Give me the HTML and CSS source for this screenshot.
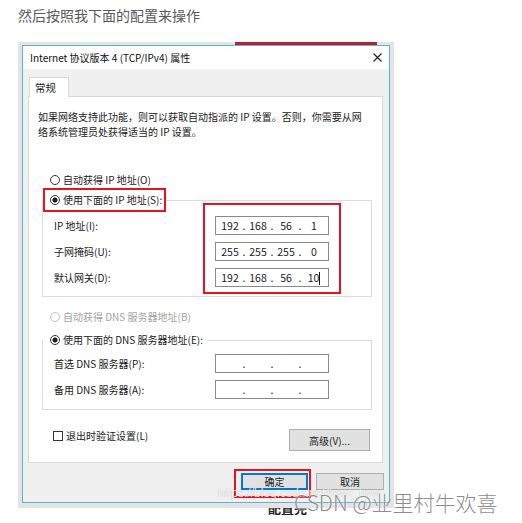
FILE: index.html
```
<!DOCTYPE html>
<html lang="zh-CN">
<head>
    <meta charset="UTF-8">
    <meta name="viewport" content="width=device-width, initial-scale=1.0">
    <link rel="stylesheet" href="styles.css">
</head>
<body>
    <p class="intro">然后按照我下面的配置来操作</p>

    <div class="figure">
        <div class="shot">
            <div class="bg-bar"></div>
            <div class="dialog">
                <div class="titlebar">
                    <span>Internet 协议版本 4 (TCP/IPv4) 属性</span>
                    <svg width="9" height="9" viewBox="0 0 9 9"><path d="M0.5 0.5 L8.5 8.5 M8.5 0.5 L0.5 8.5" stroke="#222" stroke-width="1.1" fill="none"/></svg>
                </div>
                <div class="dlg-body">
                    <div class="tab">常规</div>
                    <div class="panel">
                        <p class="desc">如果网络支持此功能，则可以获取自动指派的 IP 设置。否则，你需要从网<br>络系统管理员处获得适当的 IP 设置。</p>

                        <div class="opt first"><span class="radio"></span>自动获得 IP 地址(O)</div>
                        <fieldset class="group">
                            <legend class="opt legend mark"><span class="radio on"></span>使用下面的 IP 地址(S):</legend>
                            <div class="group-body">
                                <div class="labels">
                                    <span>IP 地址(I):</span>
                                    <span>子网掩码(U):</span>
                                    <span>默认网关(D):</span>
                                </div>
                                <div class="fields mark-fields">
                                    <div class="ip"><span class="oct">192</span><span class="dot">.</span><span class="oct">168</span><span class="dot">.</span><span class="oct">56</span><span class="dot">.</span><span class="oct">1</span></div>
                                    <div class="ip"><span class="oct">255</span><span class="dot">.</span><span class="oct">255</span><span class="dot">.</span><span class="oct">255</span><span class="dot">.</span><span class="oct">0</span></div>
                                    <div class="ip"><span class="oct">192</span><span class="dot">.</span><span class="oct">168</span><span class="dot">.</span><span class="oct">56</span><span class="dot">.</span><span class="oct">10<span class="caret"></span></span></div>
                                </div>
                            </div>
                        </fieldset>

                        <div class="opt disabled"><span class="radio"></span>自动获得 DNS 服务器地址(B)</div>
                        <fieldset class="group dns">
                            <legend class="opt legend"><span class="radio on"></span>使用下面的 DNS 服务器地址(E):</legend>
                            <div class="group-body">
                                <div class="labels">
                                    <span>首选 DNS 服务器(P):</span>
                                    <span>备用 DNS 服务器(A):</span>
                                </div>
                                <div class="fields">
                                    <div class="ip"><span class="oct"></span><span class="dot">.</span><span class="oct"></span><span class="dot">.</span><span class="oct"></span><span class="dot">.</span><span class="oct"></span></div>
                                    <div class="ip"><span class="oct"></span><span class="dot">.</span><span class="oct"></span><span class="dot">.</span><span class="oct"></span><span class="dot">.</span><span class="oct"></span></div>
                                </div>
                            </div>
                        </fieldset>

                        <div class="check-row">
                            <div class="check"><span class="box"></span>退出时验证设置(L)</div>
                            <div class="btn adv">高级(V)...</div>
                        </div>
                    </div>
                    <div class="actions">
                        <span class="mark-ok"><span class="btn ok">确定</span></span>
                        <span class="btn">取消</span>
                    </div>
                </div>
            </div>
        </div>
        <div class="wm-url">https://blog.csdn.net/lswc_byw</div>
        <div class="wm-csdn">CSDN @业里村牛欢喜</div>
    </div>
    <div class="under">配置完</div>
</body>
</html>
```

FILE: styles.css
```
body {
    margin: 0;
    font-family: "Noto Sans CJK SC", "Noto Sans", sans-serif;
    background: #fff;
}
.intro {
    margin: 4px 0 0 18px;
    font-size: 14px;
    line-height: 22px;
    color: #595959;
}

/* screenshot */
.figure {
    position: relative;
    width: 376px;
    margin: 16px 0 0 18px;
}
.shot {
    position: relative;
    z-index: 1;
    background: #e4e4e4;
    padding: 0 4px 5px 4px;
}
.bg-bar {
    height: 3px;
    width: 142px;
    margin-left: 213px;
    background: #bc1f2a;
}
.dialog {
    width: 368px;
    box-sizing: border-box;
    border: 1px solid #58b4d1;
    background: #f0f0f0;
    font-size: 10px;
    color: #1a1a1a;
}
.titlebar {
    height: 23px;
    background: #fff;
    display: flex;
    align-items: center;
    justify-content: space-between;
    padding: 0 7px;
    font-size: 10px;
    color: #111;
}
.titlebar svg {
    display: block;
}
.dlg-body {
    padding: 8px 5px 12px 5px;
}
.tab {
    position: relative;
    z-index: 1;
    width: 38px;
    height: 19px;
    margin-left: 1px;
    margin-bottom: -1px;
    background: #fff;
    border: 1px solid #d9d9d9;
    border-bottom: none;
    line-height: 19px;
    text-indent: 5px;
    font-size: 10.5px;
}
.panel {
    background: #fff;
    border: 1px solid #d9d9d9;
    margin-right: 1px;
    padding-bottom: 11px;
}
.desc {
    margin: 12px 0 0 9px;
    line-height: 15px;
}

/* radios */
.opt {
    display: flex;
    align-items: center;
    line-height: 16px;
    margin-left: 21px;
}
.opt.first {
    margin-top: 33px;
}
.opt.disabled {
    margin-top: 12px;
    color: #a3a3a3;
}
.radio {
    width: 10px;
    height: 10px;
    box-sizing: border-box;
    border: 1px solid #333;
    border-radius: 50%;
    margin-right: 3px;
    background: #fff;
}
.radio.on {
    background: radial-gradient(circle, #222 0 2.3px, #fff 2.8px);
}
.disabled .radio {
    border-color: #c4c4c4;
}

/* group boxes */
.group {
    margin: 0 10px 0 13px;
    padding: 0;
    border: 1px solid #dcdcdc;
    min-width: 0;
}
.group.dns {
    margin-top: 3px;
}
.legend {
    margin-left: 0;
    line-height: 14px;
    padding: 3px 2px 3px 5px;
    border: 2px solid transparent;
}
.legend.mark {
    border-color: #e3151d;
}
.group-body {
    display: flex;
    justify-content: space-between;
    padding: 4px 42px 9px 11px;
}
.dns .group-body {
    padding-top: 2px;
    padding-bottom: 10px;
}
.labels,
.fields {
    display: flex;
    flex-direction: column;
    gap: 7px;
}
.labels span {
    height: 19px;
    line-height: 19px;
}
.mark-fields {
    border: 2px solid #e3151d;
    padding: 11px 10px 5px 10px;
    margin: -13px -12px -7px auto;
}

/* ip address control */
.ip {
    width: 114px;
    height: 19px;
    box-sizing: border-box;
    border: 1px solid #8a8a8a;
    background: #fff;
    display: flex;
    align-items: center;
    padding: 0 2px;
    font-size: 10.5px;
}
.oct {
    width: 24px;
    text-align: center;
}
.dot {
    width: 4px;
    text-align: center;
}
.caret {
    display: inline-block;
    width: 1px;
    height: 13px;
    background: #111;
    vertical-align: middle;
}

/* bottom of panel */
.check-row {
    display: flex;
    justify-content: space-between;
    align-items: flex-start;
    margin: 19px 12px 0 24px;
}
.check {
    display: flex;
    align-items: center;
    line-height: 14px;
}
.box {
    width: 10px;
    height: 10px;
    box-sizing: border-box;
    border: 1px solid #333;
    margin-right: 3px;
}
.btn {
    display: inline-flex;
    align-items: center;
    justify-content: center;
    box-sizing: border-box;
    width: 68px;
    height: 17px;
    background: #e1e1e1;
    border: 1px solid #adadad;
}
.btn.adv {
    width: 81px;
    height: 22px;
}
.btn.ok {
    width: 67px;
    border-color: #0078d7;
    box-shadow: inset 0 0 0 1px #0078d7;
}
.actions {
    display: flex;
    justify-content: flex-end;
    align-items: flex-start;
    gap: 8px;
    margin-top: 10px;
}
.mark-ok {
    display: block;
    border: 2px solid #e3151d;
    padding: 2px 1px 6px 5px;
    margin: -4px -3px -8px -7px;
}

/* watermarks */
.wm-url {
    position: absolute;
    z-index: 2;
    left: 200px;
    top: 444px;
    font-family: "Liberation Sans", sans-serif;
    font-size: 12px;
    line-height: 14px;
    color: rgba(255, 255, 255, 0.9);
    text-shadow: 0 0 1px rgba(0, 0, 0, 0.3);
}
.wm-csdn {
    position: absolute;
    z-index: 2;
    left: 276px;
    top: 448px;
    white-space: nowrap;
    font-size: 21px;
    line-height: 24px;
    font-weight: 300;
    color: rgba(120, 120, 120, 0.85);
    text-shadow: 0 0 2px #fff;
}
.under {
    margin: -8px 0 0 268px;
    font-size: 13px;
    font-weight: bold;
    line-height: 16px;
    color: #222;
}
```
